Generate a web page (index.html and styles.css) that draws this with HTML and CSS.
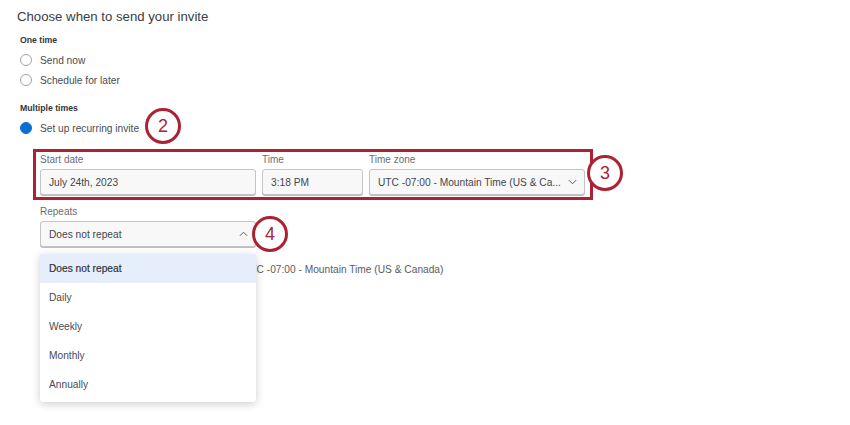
FILE: index.html
```html
<!DOCTYPE html>
<html lang="en">
<head>
<meta charset="utf-8">
<title>Choose when to send your invite</title>
<link rel="stylesheet" href="styles.css">
</head>
<body>
<main class="page">
  <h1 class="title">Choose when to send your invite</h1>
  <section class="group">
    <h2 class="group-title">One time</h2>
    <div class="radio-row"><span class="radio"></span><span>Send now</span></div>
    <div class="radio-row"><span class="radio"></span><span>Schedule for later</span></div>
  </section>
  <section class="group group-multi">
    <h2 class="group-title">Multiple times</h2>
    <div class="radio-row"><span class="radio radio-on"></span><span>Set up recurring invite</span><span class="callout callout-2">2</span></div>
  </section>
  <div class="details">
    <div class="highlight">
      <div class="field field-date">
        <span class="field-label">Start date</span>
        <div class="control">July 24th, 2023</div>
      </div>
      <div class="field field-time">
        <span class="field-label">Time</span>
        <div class="control">3:18 PM</div>
      </div>
      <div class="field field-zone">
        <span class="field-label">Time zone</span>
        <div class="control control-select">
          <span class="control-text">UTC -07:00 - Mountain Time (US &amp; Ca...</span>
          <svg class="chevron" viewBox="0 0 10 6"><path d="M1 1l4 4 4-4"/></svg>
        </div>
      </div>
      <span class="callout callout-3">3</span>
    </div>
    <div class="repeats">
      <span class="field-label">Repeats</span>
      <div class="control control-select">
        <span class="control-text">Does not repeat</span>
        <svg class="chevron" viewBox="0 0 10 6"><path d="M1 5l4-4 4 4"/></svg>
      </div>
      <span class="callout callout-4">4</span>
      <ul class="menu">
        <li class="menu-item menu-item-active">Does not repeat</li>
        <li class="menu-item">Daily</li>
        <li class="menu-item">Weekly</li>
        <li class="menu-item">Monthly</li>
        <li class="menu-item">Annually</li>
      </ul>
    </div>
    <p class="zone-note">UTC -07:00 - Mountain Time (US &amp; Canada)</p>
  </div>
</main>
</body>
</html>
```
FILE: styles.css
```css
* { box-sizing: border-box; }
html, body { margin: 0; padding: 0; background: #fff; }
body {
  width: 850px;
  height: 425px;
  overflow: hidden;
  font-family: "Liberation Sans", Arial, sans-serif;
  color: #4a4c52;
  font-size: 10.2px;
}
.page { padding: 9px 0 0 17px; }
.title {
  margin: 0;
  font-size: 13.2px;
  line-height: 16px;
  font-weight: 400;
  color: #3a3c42;
}
.group { margin: 10px 0 0 3px; }
.group-multi { margin-top: 13px; }
.group-title {
  margin: 0 0 4px;
  font-size: 8.7px;
  line-height: 11px;
  font-weight: 700;
  color: #33353a;
}
.radio-row {
  position: relative;
  display: flex;
  align-items: center;
  gap: 8px;
  height: 20px;
}
.radio {
  width: 12px;
  height: 12px;
  border-radius: 50%;
  border: 1px solid #a3a4a8;
  background: #fff;
}
.radio-on { background: #0b6fd0; border-color: #0b6fd0; }
.callout {
  position: absolute;
  width: 36px;
  height: 36px;
  border: 3px solid #ac2232;
  border-radius: 50%;
  background: #fff;
  color: #ac2232;
  font-size: 18px;
  line-height: 30px;
  text-align: center;
}
.callout-2 { left: 125px; top: -10px; }
.callout-3 { left: 551px; top: 3px; }
.callout-4 { left: 212px; top: 11px; }
.details { margin: 11px 0 0 16px; }
.highlight {
  position: relative;
  display: flex;
  gap: 6px;
  width: 560px;
  height: 51px;
  padding: 2px 0 0 4px;
  border: 3px solid #ac2232;
}
.field { display: flex; flex-direction: column; }
.field-date { width: 216px; }
.field-time { width: 101px; }
.field-zone { width: 216px; }
.field-label {
  display: block;
  font-size: 10px;
  line-height: 13px;
  color: #6b6d72;
  margin-bottom: 3px;
}
.highlight .field-label { margin-top: -1px; }
.control {
  display: flex;
  align-items: center;
  justify-content: space-between;
  height: 26px;
  padding: 0 7px 0 8px;
  border: 1px solid #c4c4c6;
  border-radius: 3px;
  background: #f8f8f9;
  font-size: 10.2px;
  color: #44464c;
  box-shadow: 0 1px 0 #bdbdbf;
}
.control-text { white-space: nowrap; }
.chevron {
  flex: none;
  width: 9px;
  height: 6px;
  fill: none;
  stroke: #55575c;
  stroke-width: 1.1;
}
.repeats {
  position: relative;
  width: 216px;
  margin: 5px 0 0 7px;
}
.menu {
  position: absolute;
  left: 0;
  top: 49px;
  width: 216px;
  margin: 0;
  padding: 0 0 3px;
  list-style: none;
  background: #fff;
  border-radius: 3px;
  box-shadow: 0 2px 8px rgba(0, 0, 0, 0.2);
}
.menu-item {
  height: 29px;
  padding-left: 9px;
  line-height: 29px;
  font-size: 10.2px;
  color: #4a4c52;
}
.menu-item-active {
  background: #e5eefa;
  color: #33353a;
  -webkit-text-stroke: 0.2px #33353a;
}
.zone-note {
  margin: 16px 0 0 210px;
  font-size: 10.2px;
  line-height: 13px;
  color: #5a5c62;
}
```
